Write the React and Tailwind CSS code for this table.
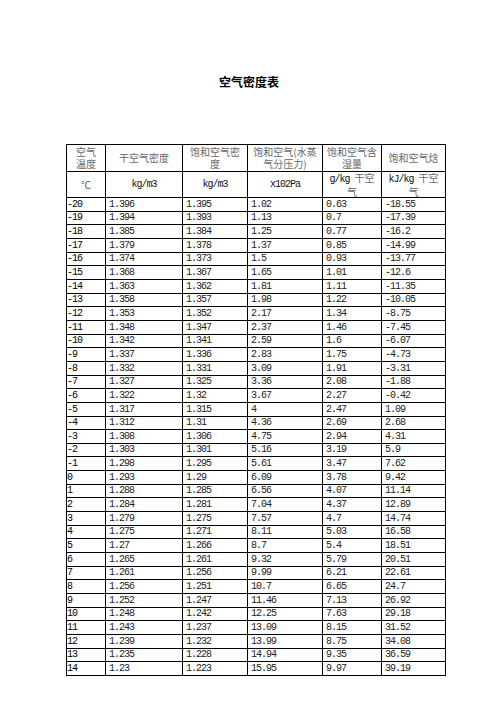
import React from "react";

const rows = [
  ["-20", "1.396", "1.395", "1.02", "0.63", "-18.55"],
  ["-19", "1.394", "1.393", "1.13", "0.7", "-17.39"],
  ["-18", "1.385", "1.384", "1.25", "0.77", "-16.2"],
  ["-17", "1.379", "1.378", "1.37", "0.85", "-14.99"],
  ["-16", "1.374", "1.373", "1.5", "0.93", "-13.77"],
  ["-15", "1.368", "1.367", "1.65", "1.01", "-12.6"],
  ["-14", "1.363", "1.362", "1.81", "1.11", "-11.35"],
  ["-13", "1.358", "1.357", "1.98", "1.22", "-10.05"],
  ["-12", "1.353", "1.352", "2.17", "1.34", "-8.75"],
  ["-11", "1.348", "1.347", "2.37", "1.46", "-7.45"],
  ["-10", "1.342", "1.341", "2.59", "1.6", "-6.07"],
  ["-9", "1.337", "1.336", "2.83", "1.75", "-4.73"],
  ["-8", "1.332", "1.331", "3.09", "1.91", "-3.31"],
  ["-7", "1.327", "1.325", "3.36", "2.08", "-1.88"],
  ["-6", "1.322", "1.32", "3.67", "2.27", "-0.42"],
  ["-5", "1.317", "1.315", "4", "2.47", "1.09"],
  ["-4", "1.312", "1.31", "4.36", "2.69", "2.68"],
  ["-3", "1.308", "1.306", "4.75", "2.94", "4.31"],
  ["-2", "1.303", "1.301", "5.16", "3.19", "5.9"],
  ["-1", "1.298", "1.295", "5.61", "3.47", "7.62"],
  ["0", "1.293", "1.29", "6.09", "3.78", "9.42"],
  ["1", "1.288", "1.285", "6.56", "4.07", "11.14"],
  ["2", "1.284", "1.281", "7.04", "4.37", "12.89"],
  ["3", "1.279", "1.275", "7.57", "4.7", "14.74"],
  ["4", "1.275", "1.271", "8.11", "5.03", "16.58"],
  ["5", "1.27", "1.266", "8.7", "5.4", "18.51"],
  ["6", "1.265", "1.261", "9.32", "5.79", "20.51"],
  ["7", "1.261", "1.256", "9.99", "6.21", "22.61"],
  ["8", "1.256", "1.251", "10.7", "6.65", "24.7"],
  ["9", "1.252", "1.247", "11.46", "7.13", "26.92"],
  ["10", "1.248", "1.242", "12.25", "7.63", "29.18"],
  ["11", "1.243", "1.237", "13.09", "8.15", "31.52"],
  ["12", "1.239", "1.232", "13.99", "8.75", "34.08"],
  ["13", "1.235", "1.228", "14.94", "9.35", "36.59"],
  ["14", "1.23", "1.223", "15.95", "9.97", "39.19"],
];

const cjk = "font-['Noto_Sans_CJK_SC',sans-serif]";
const mono = "font-['Liberation_Mono','Noto_Sans_CJK_SC',monospace] tracking-[-1px]";

const headCell =
  "border-r border-b border-black flex items-center justify-center text-center text-[10px] leading-[12px]";

const App = () => {
  // rows end at 675 from the header bottom line at 197
  const heights = rows.map((_, i) => {
    const top = Math.round(197 + i * (478 / 35));
    const bottom = Math.round(197 + (i + 1) * (478 / 35));
    return bottom - top;
  });

  return (
    <div className="w-[496px] h-[702px] bg-white overflow-hidden">
      <h1
        className={`${cjk} pt-[76px] text-center text-[12px] leading-[12px] font-bold text-black pl-[2px]`}
      >
        空气密度表
      </h1>

      <div className="ml-[66px] mt-[56px] w-[380px] border-l border-t border-black grid grid-cols-[39px_77px_65px_75px_59px_64px]">
        {/* header row 1 */}
        <div className={`${headCell} h-[27px] ${cjk} text-[#666]`}>
          空气
          <br />
          温度
        </div>
        <div className={`${headCell} h-[27px] ${cjk} text-[#666]`}>
          干空气密度
        </div>
        <div className={`${headCell} h-[27px] ${cjk} text-[#666]`}>
          饱和空气密
          <br />
          度
        </div>
        <div className={`${headCell} h-[27px] ${cjk} text-[#666]`}>
          饱和空气(水蒸
          <br />
          气分压力)
        </div>
        <div className={`${headCell} h-[27px] ${cjk} text-[#666]`}>
          饱和空气含
          <br />
          湿量
        </div>
        <div className={`${headCell} h-[27px] ${cjk} text-[#666]`}>
          饱和空气焓
        </div>

        {/* header row 2 */}
        <div className={`${headCell} h-[26px] ${cjk} text-[#555]`}>℃</div>
        <div className={`${headCell} h-[26px] text-[#111]`}>
          <span className={mono}>kg/m3</span>
        </div>
        <div className={`${headCell} h-[26px] text-[#111]`}>
          <span className={mono}>kg/m3</span>
        </div>
        <div className={`${headCell} h-[26px] text-[#111]`}>
          <span className={mono}>x102Pa</span>
        </div>
        <div className={`${headCell} flex-col h-[26px] text-[#111]`}>
          <span>
            <span className={mono}>g/kg </span>
            <span className={`${cjk} text-[#666]`}>干空</span>
          </span>
          <span className={`${cjk} text-[#666]`}>气</span>
        </div>
        <div className={`${headCell} flex-col h-[26px] text-[#111]`}>
          <span>
            <span className={mono}>kJ/kg </span>
            <span className={`${cjk} text-[#666]`}>干空</span>
          </span>
          <span className={`${cjk} text-[#666]`}>气</span>
        </div>

        {/* data rows */}
        {rows.map((row, i) =>
          row.map((val, j) => (
            <div
              key={`${i}-${j}`}
              className={`border-r border-b border-black flex items-center ${
                heights[i] === 14 ? "h-[14px]" : "h-[13px]"
              } ${j === 0 ? "pl-0 text-black" : "pl-[3px] text-[#222]"} ${mono} text-[10px] leading-[10px]`}
            >
              {val}
            </div>
          ))
        )}
      </div>
    </div>
  );
};

export default App;
